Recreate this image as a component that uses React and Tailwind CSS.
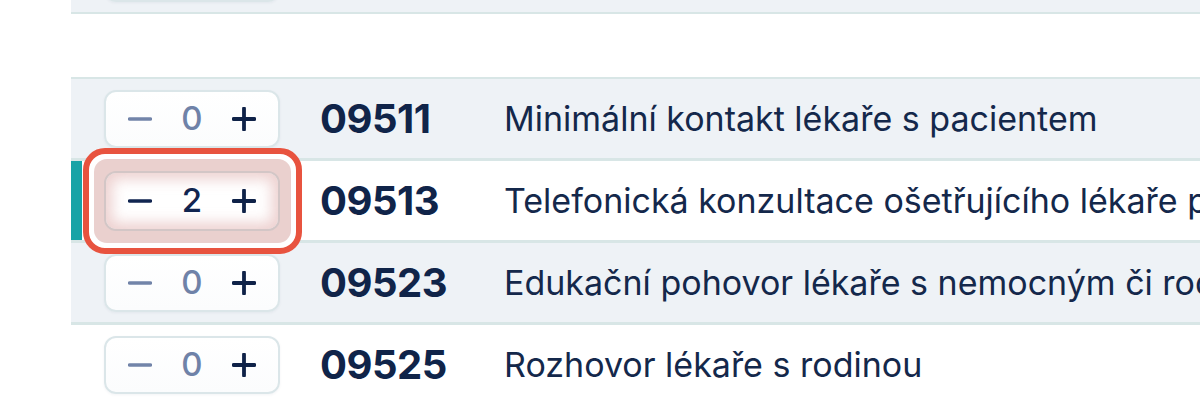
import { useState } from "react";

const rows = [
  { code: "09511", name: "Minimální kontakt lékaře s pacientem", count: 0 },
  {
    code: "09513",
    name: "Telefonická konzultace ošetřujícího lékaře pacientem nebo zákonným zástupcem pacienta",
    count: 2,
  },
  { code: "09523", name: "Edukační pohovor lékaře s nemocným či rodinou", count: 0 },
  { code: "09525", name: "Rozhovor lékaře s rodinou", count: 0 },
];

const MinusIcon = () => (
  <svg width="24" height="24" viewBox="0 0 24 24">
    <path d="M1.5 12h21" stroke="currentColor" strokeWidth="3.4" strokeLinecap="round" />
  </svg>
);

const PlusIcon = () => (
  <svg width="24" height="24" viewBox="0 0 24 24">
    <path
      d="M1.5 12h21M12 1.5v21"
      stroke="currentColor"
      strokeWidth="3.8"
      strokeLinecap="round"
    />
  </svg>
);

const Stepper = ({ value, onChange, active }) => (
  <div
    className={
      active
        ? "relative z-10 flex h-[60px] w-[176px] items-center justify-between rounded-[12px] border-2 border-[#d3c6c6] bg-white px-[22px] shadow-[inset_0_0_14px_6px_rgba(222,170,168,0.55)]"
        : "flex h-[58px] w-[176px] items-center justify-between rounded-[12px] border-2 border-[#dbe6e9] bg-gradient-to-b from-white to-[#fbfcfd] px-[22px] shadow-[0_1px_3px_rgba(15,35,72,0.05)]"
    }
  >
    <button
      type="button"
      onClick={() => onChange(Math.max(0, value - 1))}
      className={value > 0 ? "text-[#112550]" : "text-[#7284a9]"}
    >
      <MinusIcon />
    </button>
    <span
      className={
        "text-[33px] font-medium leading-none " +
        (value > 0 ? "text-[#112550]" : "text-[#6f82a8]")
      }
    >
      {value}
    </span>
    <button type="button" onClick={() => onChange(value + 1)} className="text-[#0f2248]">
      <PlusIcon />
    </button>
  </div>
);

const Row = ({ item, index, onChange, highlighted }) => {
  const striped = index % 2 === 0;
  return (
    <div
      className={
        "flex h-[82px] items-center border-b-[3px] border-[#d8e6e6] " +
        (striped ? "bg-[#eef2f6]" : "bg-white")
      }
    >
      {highlighted ? (
        <div className="mr-[22px] w-[11px] shrink-0 self-stretch bg-[#18a3a6]" />
      ) : (
        <div className="w-[33px] shrink-0" />
      )}
      <div className="relative shrink-0">
        {highlighted && (
          <div className="absolute -top-[23px] -bottom-[23px] -left-[21px] -right-[22px] rounded-[22px] border-[6px] border-[#e8533f] bg-white p-[5px]">
            <div className="h-full w-full rounded-[13px] bg-[#ead0ce]" />
          </div>
        )}
        <Stepper value={item.count} onChange={onChange} active={highlighted} />
      </div>
      <div className="ml-[40px] w-[184px] shrink-0 text-[40px] font-bold tracking-[-0.5px] text-[#102449]">
        {item.code}
      </div>
      <div className="whitespace-nowrap text-[34px] text-[#14284b]">{item.name}</div>
    </div>
  );
};

export default function App() {
  const [items, setItems] = useState(rows);

  const setCount = (code, count) => {
    setItems(items.map((item) => (item.code === code ? { ...item, count } : item)));
  };

  return (
    <div className="h-[400px] w-full overflow-hidden bg-white pl-[71px] font-['Inter','Noto_Sans',sans-serif]">
      {/* previous group, only its last row is in view */}
      <div className="-mt-[66px] flex h-[80px] items-center border-b-[2px] border-[#d8e6e6] bg-[#eef2f6] pl-[33px]">
        <Stepper value={0} onChange={() => {}} />
      </div>

      <div className="mt-[63px] border-t-[2px] border-[#d8e6e6]">
        {items.map((item, index) => (
          <Row
            key={item.code}
            item={item}
            index={index}
            highlighted={item.code === "09513"}
            onChange={(count) => setCount(item.code, count)}
          />
        ))}
      </div>
    </div>
  );
}
